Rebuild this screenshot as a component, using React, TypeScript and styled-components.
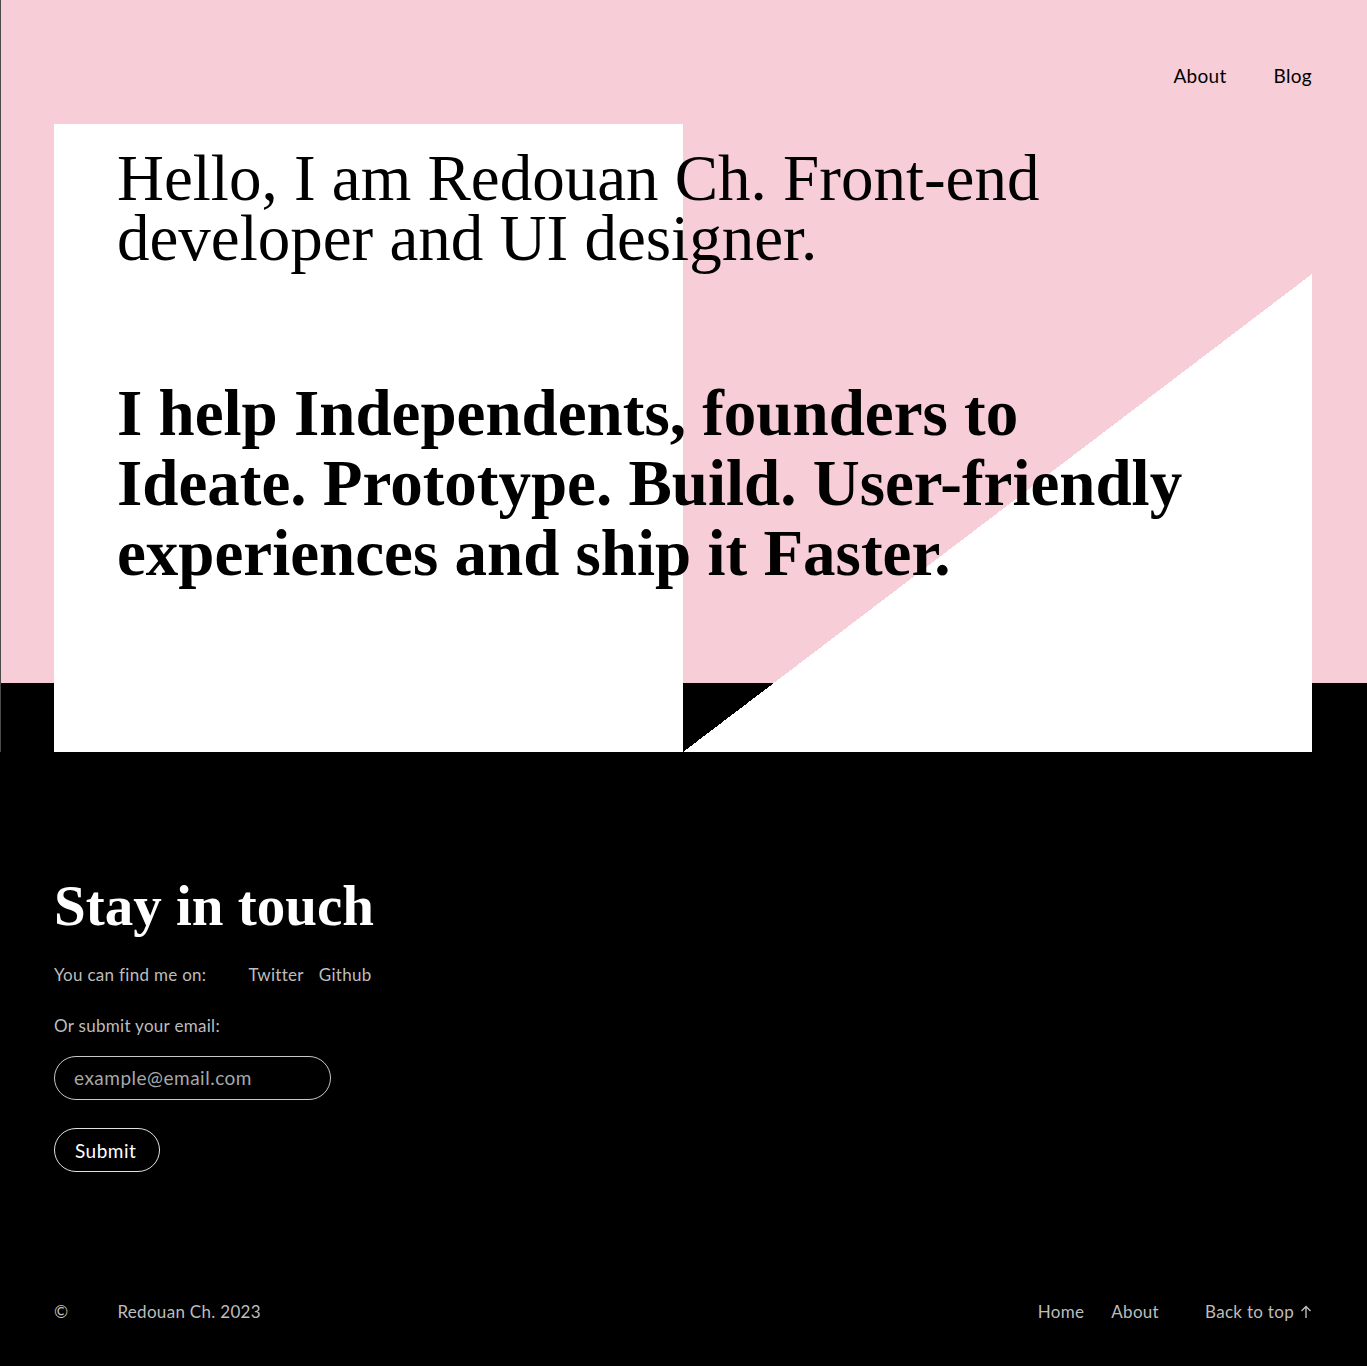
import styled, { createGlobalStyle } from "styled-components";

const GlobalStyle = createGlobalStyle`
  body {
    margin: 0;
    background: #000;
    font-family: "Lato", "Noto Sans", sans-serif;
    letter-spacing: 0.3px;
  }
  * {
    box-sizing: border-box;
  }
`;

const SERIF = `"Liberation Serif", "Times New Roman", serif`;

const SHero = styled.section`
  background: linear-gradient(to bottom, #f7cdd8 0 683px, #000 683px);
  border-left: 1px solid #4a4a4a;
  padding: 0 55px 0 53px;
`;

const SNav = styled.nav`
  height: 124px;
  display: flex;
  justify-content: flex-end;
  align-items: flex-start;
  gap: 47px;
  padding-top: 64px;
`;

const SNavLink = styled.a`
  font-size: 19px;
  line-height: 24px;
  color: #000;
  text-decoration: none;
`;

const SCard = styled.div`
  height: 628px;
  padding: 24px 63px;
  letter-spacing: 0;
  background:
    linear-gradient(to right, #fff 50%, transparent 50%) left top / 100% 100% no-repeat,
    linear-gradient(to bottom right, transparent 50%, #fff 50%) right bottom / 50% 478px no-repeat;
`;

const SIntro = styled.h1`
  margin: 0;
  font-family: ${SERIF};
  font-weight: 400;
  font-size: 65px;
  line-height: 60px;
  color: #000;
`;

const SPitch = styled.h2`
  margin: 110px 0 0;
  font-family: ${SERIF};
  font-weight: 700;
  font-size: 65px;
  line-height: 70px;
  color: #000;
`;

const SFooter = styled.footer`
  padding: 122px 55px 42px 54px;
  color: #bdbdbd;
`;

const STitle = styled.h2`
  margin: 0;
  font-family: ${SERIF};
  font-weight: 700;
  font-size: 57px;
  line-height: 64px;
  letter-spacing: 0;
  color: #fff;
`;

const SRow = styled.div<{ $top: number }>`
  display: flex;
  align-items: center;
  margin-top: ${p => p.$top}px;
  font-size: 17px;
  line-height: 24px;
`;

const SLinks = styled.div`
  display: flex;
  gap: 15px;
  margin-left: 42px;
`;

const SFooterLink = styled.a`
  color: #bdbdbd;
  text-decoration: none;
`;

const SInput = styled.input`
  display: block;
  margin-top: 18px;
  width: 277px;
  height: 44px;
  border: 1px solid #c8c8c8;
  border-radius: 22px;
  background: transparent;
  padding: 0 19px 2px;
  font-family: inherit;
  font-size: 19px;
  letter-spacing: 0.5px;
  color: #fff;
  outline: none;
  &::placeholder {
    color: #a8a8a8;
  }
`;

const SSubmit = styled.button`
  display: block;
  margin-top: 28px;
  height: 44px;
  padding: 0 23px 0 20px;
  border: 1px solid #e0e0e0;
  border-radius: 22px;
  background: transparent;
  color: #fff;
  font-family: inherit;
  font-size: 19px;
  letter-spacing: 0.5px;
`;

const SBottom = styled.div`
  display: flex;
  justify-content: space-between;
  align-items: center;
  margin-top: 128px;
  font-size: 17px;
  line-height: 24px;
`;

const SCopy = styled.div`
  display: flex;
  gap: 49px;
`;

const SBottomNav = styled.div`
  display: flex;
  align-items: center;
`;

const SBottomLink = styled.a<{ $gap: number }>`
  color: #bdbdbd;
  text-decoration: none;
  margin-left: ${p => p.$gap}px;
  display: flex;
  align-items: center;
  gap: 6px;
`;

export default function App() {
  return (
    <>
      <GlobalStyle />
      <SHero>
        <SNav>
          <SNavLink href="#">About</SNavLink>
          <SNavLink href="#">Blog</SNavLink>
        </SNav>
        <SCard>
          <SIntro>
            Hello, I am Redouan Ch. Front-end
            <br />
            developer and UI designer.
          </SIntro>
          <SPitch>
            I help Independents, founders to
            <br />
            Ideate. Prototype. Build. User-friendly
            <br />
            experiences and ship it Faster.
          </SPitch>
        </SCard>
      </SHero>
      <SFooter>
        <STitle>Stay in touch</STitle>
        <SRow $top={25}>
          <span>You can find me on:</span>
          <SLinks>
            <SFooterLink href="#">Twitter</SFooterLink>
            <SFooterLink href="#">Github</SFooterLink>
          </SLinks>
        </SRow>
        <SRow $top={27}>Or submit your email:</SRow>
        <SInput placeholder="example@email.com" />
        <SSubmit>Submit</SSubmit>
        <SBottom>
          <SCopy>
            <span>©</span>
            <span>Redouan Ch. 2023</span>
          </SCopy>
          <SBottomNav>
            <SBottomLink $gap={0} href="#">Home</SBottomLink>
            <SBottomLink $gap={27} href="#">About</SBottomLink>
            <SBottomLink $gap={46} href="#">
              Back to top
              <svg width="12" height="14" viewBox="0 0 12 14" fill="none" stroke="#bdbdbd" strokeWidth="1.4">
                <path d="M6 13V1.5M1.5 6L6 1.5L10.5 6" />
              </svg>
            </SBottomLink>
          </SBottomNav>
        </SBottom>
      </SFooter>
    </>
  );
}
